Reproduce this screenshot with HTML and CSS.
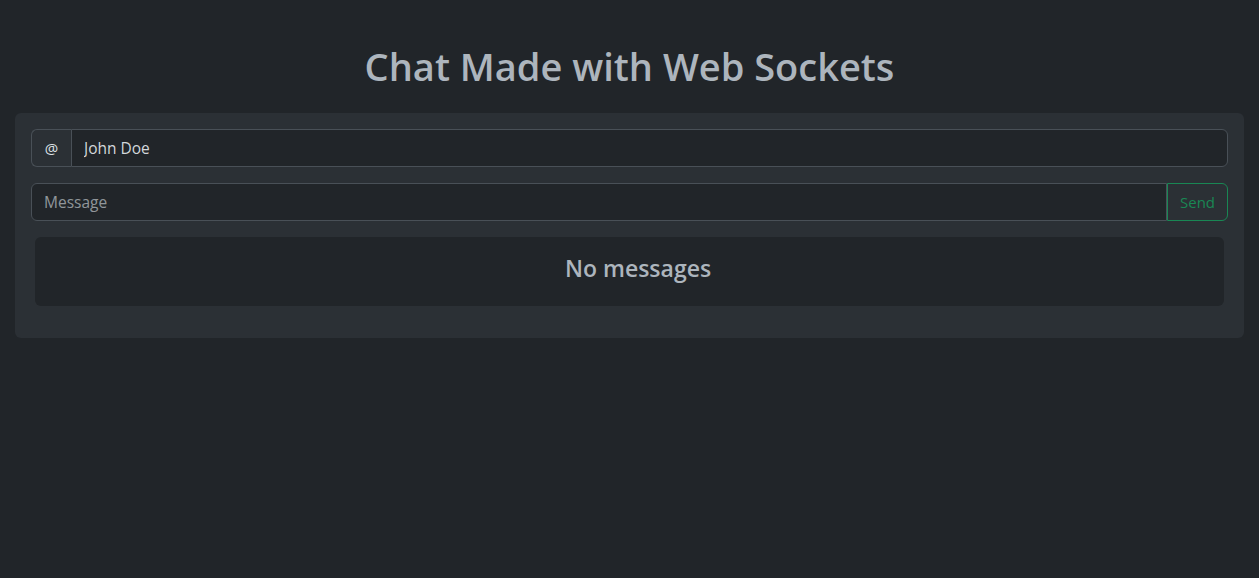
FILE: index.html
```html
<!DOCTYPE html>
<html lang="en">
<head>
<meta charset="utf-8">
<title>Chat Made with Web Sockets</title>
<link rel="stylesheet" href="styles.css">
</head>
<body>
<main class="page">
  <h1 class="title">Chat Made with Web Sockets</h1>
  <section class="panel">
    <div class="input-group">
      <span class="addon">@</span>
      <input class="field" type="text" value="John Doe" aria-label="Username">
    </div>
    <div class="input-group">
      <input class="field" type="text" placeholder="Message" aria-label="Message">
      <button class="send" type="button">Send</button>
    </div>
    <div class="messages">
      <h4 class="empty">No messages</h4>
    </div>
  </section>
</main>
</body>
</html>
```

FILE: styles.css
```css
* { box-sizing: border-box; }
html, body { margin: 0; height: 100%; }
body {
  background: #212529;
  color: #dee2e6;
  font-family: "Open Sans", "Noto Sans", "Liberation Sans", sans-serif;
  font-size: 16px;
  line-height: 1.5;
}
.page {
  padding: 42px 15px 0;
}
.title {
  margin: 0 0 23px;
  text-align: center;
  color: #adb5bd;
  font-size: 38px;
  font-weight: 600;
  line-height: 48px;
}
.panel {
  background: #2b3035;
  border-radius: 6px;
  padding: 16px;
}
.input-group {
  display: flex;
  height: 38px;
  margin-bottom: 16px;
}
.addon {
  display: flex;
  align-items: center;
  justify-content: center;
  width: 40px;
  background: #2b3035;
  border: 1px solid #495057;
  border-right: none;
  border-radius: 6px 0 0 6px;
  color: #dee2e6;
  font-size: 15px;
}
.field {
  flex: 1;
  min-width: 0;
  background: #212529;
  border: 1px solid #495057;
  color: #d3d7db;
  font: inherit;
  font-size: 15.5px;
  padding: 2px 12px 0;
  outline: none;
}
.addon + .field { border-radius: 0 6px 6px 0; }
.input-group > .field:first-child { border-radius: 6px 0 0 6px; }
.field::placeholder { color: rgba(222, 226, 230, 0.6); }
.send {
  width: 61px;
  background: transparent;
  border: 1px solid #198754;
  border-radius: 0 6px 6px 0;
  color: #198754;
  font: inherit;
  font-size: 15px;
  padding: 0;
}
.messages {
  margin: 0 4px 16px;
  background: #212529;
  border-radius: 6px;
  padding: 17px 16px 15px 33px;
  text-align: center;
}
.empty {
  margin: 0 0 8px;
  color: #adb5bd;
  font-size: 23px;
  font-weight: 600;
  line-height: 29px;
}
```
